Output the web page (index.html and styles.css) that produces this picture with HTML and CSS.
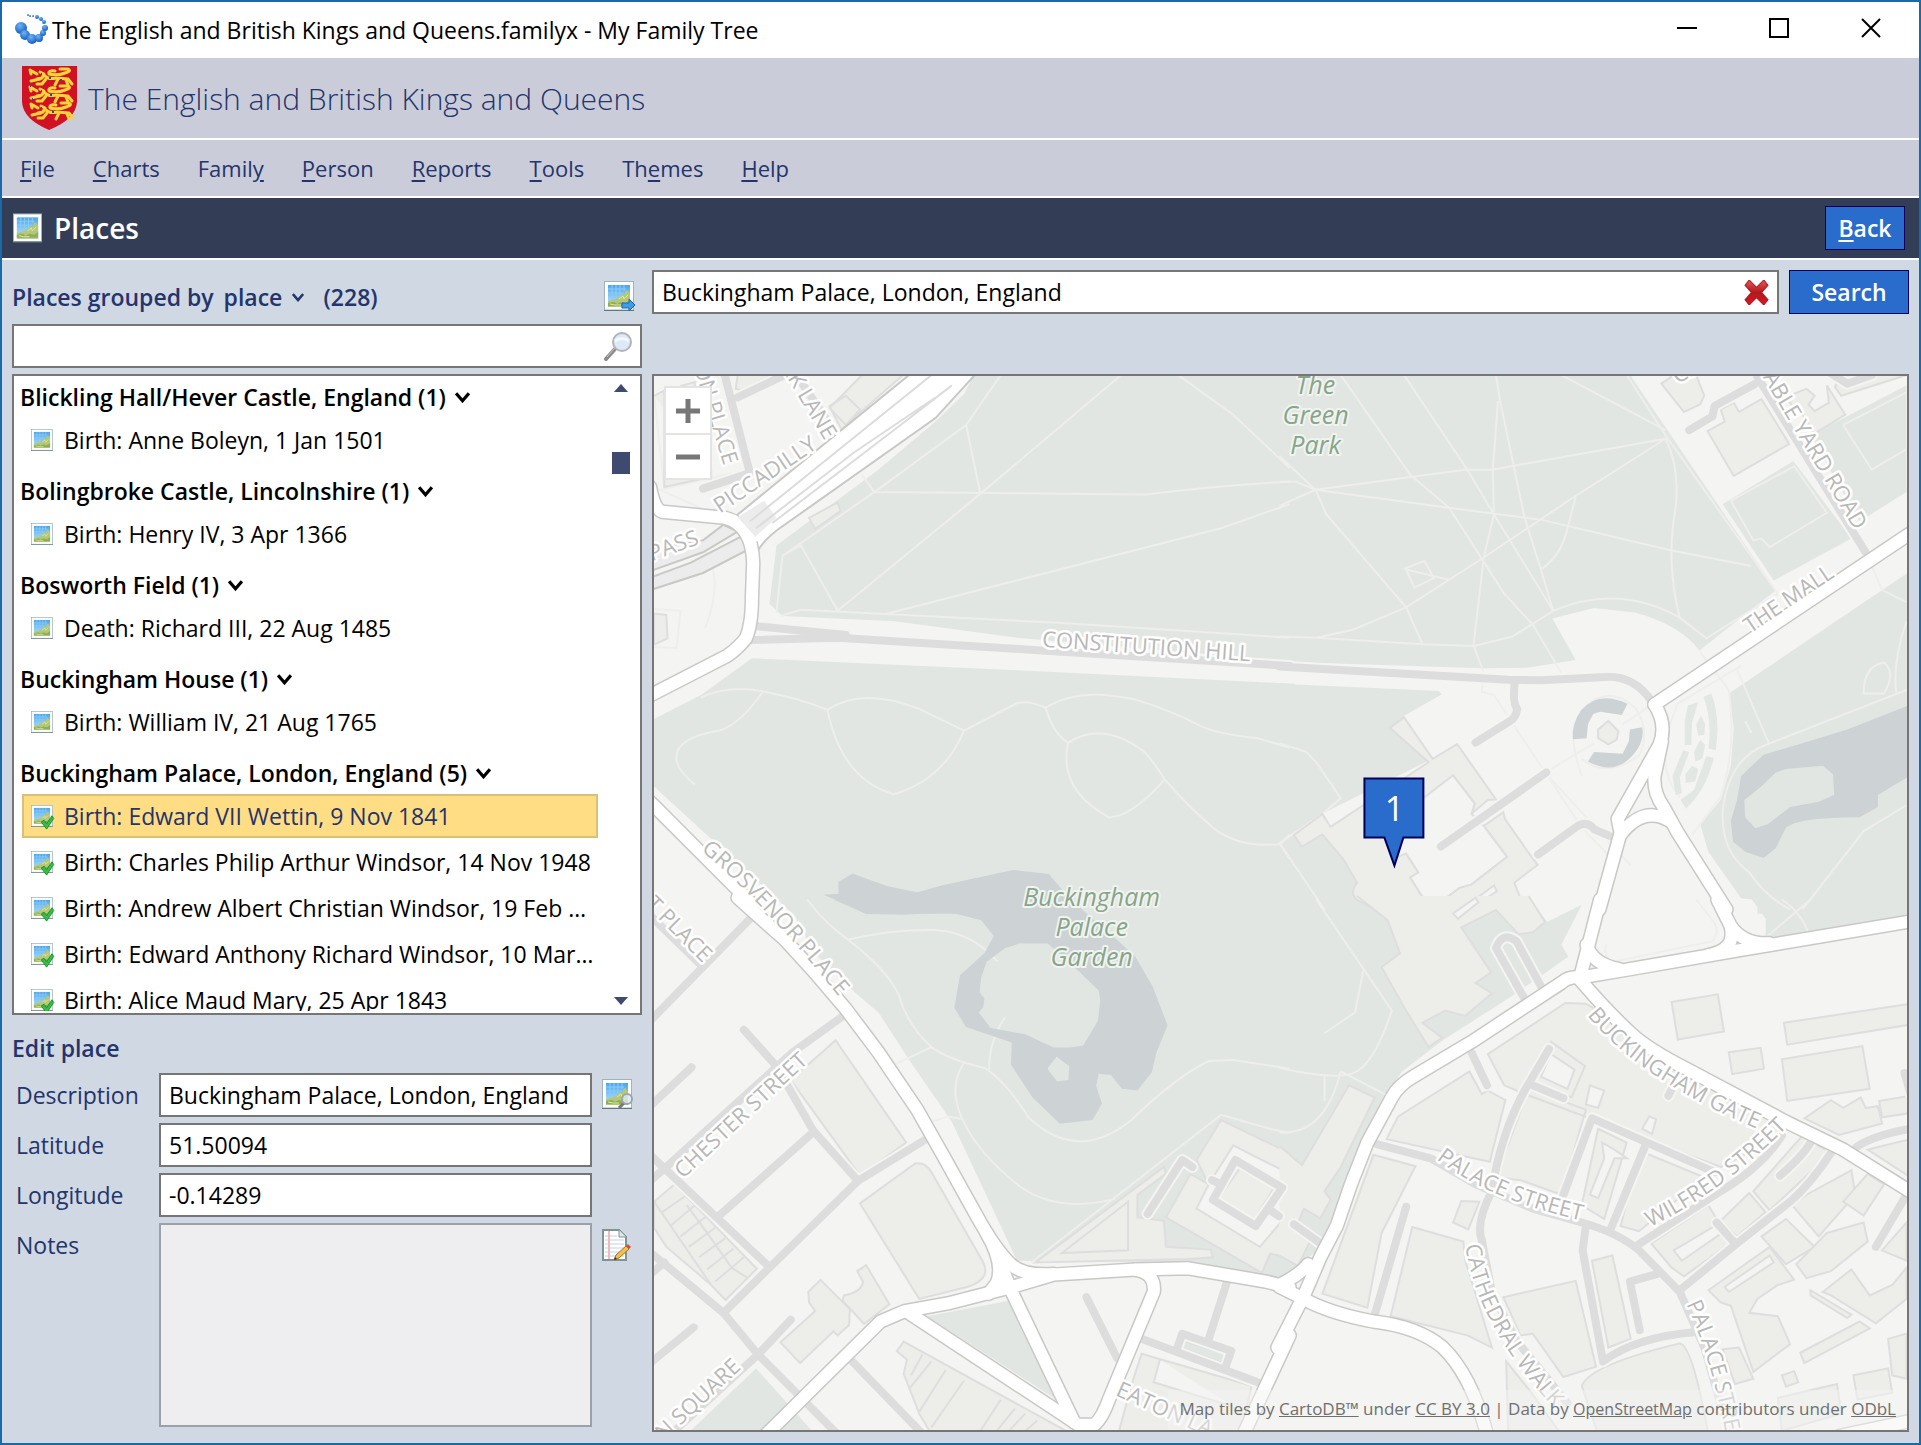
FILE: index.html
```html
<!DOCTYPE html>
<html lang="en">
<head>
  <meta charset="utf-8">
  <title>The English and British Kings and Queens.familyx - My Family Tree</title>
  <link rel="stylesheet" href="styles.css">
</head>
<body>
  <!-- Shared icons -->
  <svg class="sprite" aria-hidden="true">
    <defs>
      <linearGradient id="sky" x1="0" y1="0" x2="0" y2="1">
        <stop offset="0" stop-color="#4ba6ee"/>
        <stop offset="1" stop-color="#bfe6fb"/>
      </linearGradient>
      <radialGradient id="bead" cx="0.4" cy="0.3" r="0.8">
        <stop offset="0" stop-color="#6cb6f5"/>
        <stop offset="1" stop-color="#0b4fb8"/>
      </radialGradient>
      <linearGradient id="red" x1="0" y1="0" x2="0" y2="1">
        <stop offset="0" stop-color="#e8565a"/>
        <stop offset="0.5" stop-color="#b01a1a"/>
        <stop offset="1" stop-color="#dc1428"/>
      </linearGradient>
      <symbol id="icon-map" viewBox="0 0 30 30">
        <rect x="0.5" y="0.5" width="29" height="28.5" fill="#fff" stroke="#9fb3b8"/>
        <path d="M0 29.5H30" stroke="#5d7c80"/>
        <rect x="4" y="4" width="22" height="22" fill="url(#sky)"/>
        <path d="M8 4V20M12 4V18M16 4V16M20 4V10M4 8H22M4 12H20M4 16H16" stroke="#8ccbf7" stroke-width="1"/>
        <path d="M4 26V20L9 19L14 17L18 13L20 14L22 9L24 10L26 13V26Z" fill="#b4c878"/>
        <path d="M4 25V22L10 21L13 23L17 21L22 22L26 19V25Z" fill="#8fae5a"/>
        <path d="M15 18L19 15L20 18L24 14M6 23L11 24L17 24" stroke="#e0e6a8" fill="none"/>
      </symbol>
      <symbol id="icon-tick" viewBox="0 0 16 18">
        <path d="M1 9L4 7L7 11L13 2L15 5L7 17Z" fill="#35c045" stroke="#128a26"/>
      </symbol>
      <symbol id="icon-chevron" viewBox="0 0 14 10">
        <path d="M1 1L7 8L13 1" fill="none" stroke="currentColor" stroke-width="3"/>
      </symbol>
    </defs>
  </svg>

  <div class="window">
    <header class="titlebar">
      <svg class="app-icon" viewBox="0 0 34 32" aria-hidden="true">
        <g fill="url(#bead)">
          <circle cx="7" cy="14" r="6"/><circle cx="11" cy="21" r="5"/><circle cx="18" cy="25" r="5"/>
          <circle cx="25" cy="24" r="4"/><circle cx="29" cy="19" r="3"/><circle cx="31" cy="14" r="3"/>
          <circle cx="30" cy="8" r="2"/><circle cx="27" cy="5" r="2"/><circle cx="23" cy="3" r="2"/>
          <circle cx="19" cy="2" r="1"/><circle cx="16" cy="2" r="1"/><circle cx="14" cy="1" r="1"/>
        </g>
      </svg>
      <span class="titlebar-text">The English and British Kings and Queens.familyx - My Family Tree</span>
      <div class="window-buttons">
        <button type="button" aria-label="Minimise"><svg viewBox="0 0 22 22"><path d="M1 11H21"/></svg></button>
        <button type="button" aria-label="Maximise"><svg viewBox="0 0 22 22"><path d="M2 2H20V20H2Z"/></svg></button>
        <button type="button" aria-label="Close"><svg viewBox="0 0 22 22"><path d="M2 2L20 20M20 2L2 20"/></svg></button>
      </div>
    </header>

    <div class="banner">
      <svg class="crest" viewBox="0 0 55 64" aria-hidden="true">
        <path d="M0 0H55V36Q54 53 27 64Q1 53 0 36Z" fill="#d01224"/>
        <g id="lion" fill="none" stroke="#f6d33c" stroke-width="3" stroke-linecap="round" stroke-linejoin="round">
          <path d="M18 6L22 8L20 12L15 13M22 9Q26 14 34 12L46 13L50 18"/>
          <path d="M18 13L9 15M15 8L8 4L9 8M24 13L20 18H15M36 13L33 19M44 14L46 19M33 5Q26 4 27 8Q36 10 43 7Q50 5 46 3H38"/>
        </g>
        <path d="M19 8h1M27 12h2M38 14h2" stroke="#2450a0" stroke-width="2"/>
        <use href="#lion" y="17"/>
        <use href="#lion" x="1" y="34"/>
        <path d="M19 25h1M28 29h2M19 42h1M30 46h2M10 33h1M8 20h1" stroke="#2450a0" stroke-width="2"/>
      </svg>
      <h1>The English and British Kings and Queens</h1>
    </div>

    <nav class="menu">
      <a href="#"><u>F</u>ile</a>
      <a href="#"><u>C</u>harts</a>
      <a href="#">Famil<u>y</u></a>
      <a href="#"><u>P</u>erson</a>
      <a href="#"><u>R</u>eports</a>
      <a href="#"><u>T</u>ools</a>
      <a href="#">Th<u>e</u>mes</a>
      <a href="#"><u>H</u>elp</a>
    </nav>

    <div class="page-bar">
      <svg class="icon" aria-hidden="true"><use href="#icon-map"/></svg>
      <h2>Places</h2>
      <button type="button" class="btn btn-back"><u>B</u>ack</button>
    </div>

    <main class="content">
      <section class="sidebar">
        <div class="group-bar">
          <label for="groupBy">Places grouped by</label>
          <span class="select-wrap">
            <select id="groupBy">
              <option>place</option>
              <option>date</option>
            </select>
            <svg aria-hidden="true"><use href="#icon-chevron"/></svg>
          </span>
          <span class="count">(228)</span>
          <button type="button" class="icon-btn" aria-label="Export map">
            <svg viewBox="0 0 32 32">
              <use href="#icon-map" width="30" height="30"/>
              <path d="M18 22H25V18L31 24L25 30V27H18Z" fill="#3f9be8" stroke="#1b66b4"/>
            </svg>
          </button>
        </div>

        <div class="field-box filter">
          <input type="text" id="filter" aria-label="Filter places">
          <svg viewBox="0 0 30 30" aria-hidden="true">
            <path d="M2 28L11 18" stroke="#8a8a8a" stroke-width="4" stroke-linecap="round"/>
            <path d="M3 26L11 17" stroke="#c4c4c4" stroke-width="1"/>
            <circle cx="18" cy="11" r="9" fill="#dbe9f8" stroke="#b4b4b8" stroke-width="2"/>
            <path d="M11 10Q18 5 25 10" stroke="#f4f9ff" stroke-width="3" fill="none"/>
          </svg>
        </div>

        <div class="list-box">
          <div class="list">
            <div class="group">
              <button type="button" class="group-title">Blickling Hall/Hever Castle, England (1) <svg aria-hidden="true"><use href="#icon-chevron"/></svg></button>
              <button type="button" class="event"><span class="event-icon"><svg><use href="#icon-map"/></svg></span><span class="event-text">Birth: Anne Boleyn, 1 Jan 1501</span></button>
            </div>
            <div class="group">
              <button type="button" class="group-title">Bolingbroke Castle, Lincolnshire (1) <svg aria-hidden="true"><use href="#icon-chevron"/></svg></button>
              <button type="button" class="event"><span class="event-icon"><svg><use href="#icon-map"/></svg></span><span class="event-text">Birth: Henry IV, 3 Apr 1366</span></button>
            </div>
            <div class="group">
              <button type="button" class="group-title">Bosworth Field (1) <svg aria-hidden="true"><use href="#icon-chevron"/></svg></button>
              <button type="button" class="event"><span class="event-icon"><svg><use href="#icon-map"/></svg></span><span class="event-text">Death: Richard III, 22 Aug 1485</span></button>
            </div>
            <div class="group">
              <button type="button" class="group-title">Buckingham House (1) <svg aria-hidden="true"><use href="#icon-chevron"/></svg></button>
              <button type="button" class="event"><span class="event-icon"><svg><use href="#icon-map"/></svg></span><span class="event-text">Birth: William IV, 21 Aug 1765</span></button>
            </div>
            <div class="group">
              <button type="button" class="group-title">Buckingham Palace, London, England (5) <svg aria-hidden="true"><use href="#icon-chevron"/></svg></button>
              <button type="button" class="event selected"><span class="event-icon"><svg><use href="#icon-map"/></svg><svg class="tick"><use href="#icon-tick"/></svg></span><span class="event-text">Birth: Edward VII Wettin, 9 Nov 1841</span></button>
              <button type="button" class="event"><span class="event-icon"><svg><use href="#icon-map"/></svg><svg class="tick"><use href="#icon-tick"/></svg></span><span class="event-text">Birth: Charles Philip Arthur Windsor, 14 Nov 1948</span></button>
              <button type="button" class="event"><span class="event-icon"><svg><use href="#icon-map"/></svg><svg class="tick"><use href="#icon-tick"/></svg></span><span class="event-text">Birth: Andrew Albert Christian Windsor, 19 Feb 1960</span></button>
              <button type="button" class="event"><span class="event-icon"><svg><use href="#icon-map"/></svg><svg class="tick"><use href="#icon-tick"/></svg></span><span class="event-text">Birth: Edward Anthony Richard Windsor, 10 Mar 1964</span></button>
              <button type="button" class="event"><span class="event-icon"><svg><use href="#icon-map"/></svg><svg class="tick"><use href="#icon-tick"/></svg></span><span class="event-text">Birth: Alice Maud Mary, 25 Apr 1843</span></button>
            </div>
          </div>
          <div class="scrollbar">
            <svg viewBox="0 0 14 8"><path d="M0 8L7 0L14 8Z"/></svg>
            <span class="thumb"></span>
            <svg viewBox="0 0 14 8"><path d="M0 0L7 8L14 0Z"/></svg>
          </div>
        </div>

        <form class="edit-form">
          <h3>Edit place</h3>
          <label for="description">Description</label>
          <input type="text" id="description" value="Buckingham Palace, London, England">
          <button type="button" class="icon-btn" aria-label="Find on map">
            <svg viewBox="0 0 32 32">
              <use href="#icon-map" width="30" height="30"/>
              <path d="M17 29L22 24" stroke="#777" stroke-width="3"/>
              <circle cx="25" cy="20" r="5" fill="#dcebf5" fill-opacity="0.8" stroke="#9aa5aa" stroke-width="2"/>
            </svg>
          </button>
          <label for="latitude">Latitude</label>
          <input type="text" id="latitude" value="51.50094">
          <label for="longitude">Longitude</label>
          <input type="text" id="longitude" value="-0.14289">
          <label for="notes">Notes</label>
          <textarea id="notes" readonly></textarea>
          <button type="button" class="icon-btn" aria-label="Edit notes">
            <svg viewBox="0 0 32 32">
              <path d="M1 1H17L24 8V31H1Z" fill="#fff" stroke="#7f9496" stroke-width="2"/>
              <path d="M17 1V8H24" fill="#dfe8e8" stroke="#7f9496"/>
              <path d="M3 7H15M3 11H22M3 15H22M3 19H22M3 23H22M3 27H22" stroke="#c3cdf2"/>
              <path d="M7 2V30" stroke="#f4b8b8" stroke-width="2"/>
              <path d="M12 31L14 26L24 17L27 20L17 29Z" fill="#f2c14a" stroke="#a07420"/>
              <path d="M24 17L26 15L29 18L27 20Z" fill="#e04848"/>
              <path d="M12 31L13 28L15 30Z" fill="#333"/>
            </svg>
          </button>
        </form>
      </section>

      <section class="map-panel">
        <form class="search-row">
          <div class="field-box search-box">
            <input type="text" id="search" aria-label="Search for a place" value="Buckingham Palace, London, England">
            <button type="button" class="clear" aria-label="Clear">
              <svg viewBox="0 0 24 24"><path d="M1 5L5 0L12 7L19 0L23 5L17 12L23 19L19 24L12 17L5 24L1 19L7 12Z" fill="url(#red)" stroke="#a81a1e"/></svg>
            </button>
          </div>
          <button type="button" class="btn btn-search">Search</button>
        </form>

        <div class="map">
          <svg class="map-tiles" viewBox="0 0 1254 1055" preserveAspectRatio="xMidYMid slice">
            <defs>
              <!-- Street centre lines, one group per tile. Drawn twice: casing, then fill -->
              <g id="streets">
                <g class="nw">
                  <path d="M0 340Q10 405 30 412L100 420L185 430Q250 450 253 560L250 660Q250 740 235 780Q215 810 190 830L0 946"/>
                  <path d="M0 1255L250 1552"/>
                </g>
                <g class="ne">
                  <path d="M918 972L1550 470"/>
                  <path d="M918 972Q950 1030 930 1090L828 1305L835 1345L783 1568"/>
                  <path d="M936 1080L918 1180Q915 1230 940 1270L975 1345L1094 1568"/>
                  <path d="M835 1350Q890 1265 955 1310"/>
                </g>
                <g class="sw">
                  <path d="M215 -5L330 115L400 205L480 315L560 440L655 605L720 740L810 930Q850 1010 880 1045Q910 1085 990 1078"/>
                  <path d="M825 960Q870 1050 850 1105L830 1135"/>
                  <path d="M285 1540L565 1215L625 1185L730 1163L880 1118L990 1080L1190 1065L1320 1062L1510 1100L1568 1117"/>
                  <path d="M855 1035L885 1125L1040 1505"/>
                  <path d="M630 1187L1050 1512L1090 1512Q1110 1490 1125 1440L1235 1130Q1240 1075 1190 1066"/>
                  <path d="M1455 1540L1568 1255"/>
                </g>
                <g class="se">
                  <path d="M0 1115L60 1150Q120 1190 230 1215Q340 1230 400 1290Q470 1370 508 1540"/>
                  <path d="M-5 1290L60 1140L100 1030L140 940L175 820L215 700L275 570Q290 535 330 508L470 410L690 240Q710 220 735 225L860 200L1130 145L1550 62"/>
                  <path d="M0 1110Q50 1080 70 1050"/>
                  <path d="M735 228L785 0"/>
                  <path d="M1072 0L1104 75Q1120 145 1050 160M1104 75Q1135 130 1200 126"/>
                  <path d="M752 130Q765 185 830 200"/>
                  <path d="M735 230Q800 320 860 385Q900 430 1000 490L1240 640L1380 720L1550 845"/>
                  <path d="M1370 1545L1550 1500"/>
                </g>
              </g>
              <g id="lanes">
                <g class="nw">
                  <path d="M262 745L480 770M248 785L460 778L960 815L1568 860"/>
                  <path d="M180 0L245 300L130 345"/>
                  <path d="M350 0L460 190"/>
                  <path d="M215 80L330 15"/>
                </g>
                <g class="ne">
                  <path d="M0 862L560 900L640 902L800 892Q870 890 910 962"/>
                  <path d="M576 905Q570 970 582 985Q578 1010 565 1020L480 1083M653 1170L395 1385M633 1408L730 1325Q755 1310 770 1335L820 1360"/>
                  <path d="M1003 175L1060 135L1065 105L1165 40M1170 20L1435 530M1350 10L1390 40L1450 15"/>
                </g>
                <g class="sw">
                  <path d="M250 50L0 350M0 45L130 195M480 330L350 440L40 770L0 810M230 375L310 480L400 665L510 810M0 595L102 483M680 688L510 810L180 1190M400 670L170 910M0 735L290 1055M0 1015L180 1190L265 1310L460 1540M0 1335L107 1232M345 1210L265 1310L60 1530M492 1325L665 1535M1070 1145L1145 1320M1415 1100L1370 1265M1205 1265L1490 1390M0 1080L35 1045"/>
                  <path d="M1290 1300L1305 1250L1425 1300L1410 1350"/>
                  <path d="M1220 905L1305 750L1330 770M1435 750L1550 830L1485 940L1380 865ZM1378 808L1400 820M1515 890L1542 912"/>
                </g>
                <g class="se">
                  <path d="M602 290L530 140Q545 90 580 120L645 260M470 440L508 535M660 430L600 550Q540 680 520 840Q480 930 495 980L520 1130L580 1270L705 1450M620 535L695 572M240 705L370 745L480 820L620 890L740 930Q830 960 880 1010L980 1130L1040 1290L1100 1535M695 850L765 630L1065 785M895 710L812 945M880 992L1080 840Q1180 770 1230 680M985 1120L1120 990L1250 870Q1300 820 1350 730M1070 930L1115 990M1225 795Q1280 740 1300 700M1410 715Q1450 680 1545 660M1530 860L1460 1000M310 885L232 1200M750 940L742 1010L792 1330Q870 1260 1020 1245M925 1078L858 1100L882 1240M952 565L965 535M35 935L100 990M1530 500L1545 560"/>
                </g>
              </g>
            </defs>

            <!-- Parks -->
            <g class="park">
              <g class="nw">
                <path d="M800 0L770 70L700 150L560 290L310 510L293 680L325 715L600 730L900 778L1580 848V0Z"/>
                <path d="M250 838L900 873L1580 912V1580H350L0 1200V1020L125 945Z"/>
              </g>
              <g class="ne">
                <path d="M0 0H850L1215 640L1028 815Q980 740 870 705L770 692L668 722L725 843L610 865L500 867L0 848Z"/>
                <path d="M1085 390L1258 265L1400 490L1210 612Z"/>
                <path d="M1300 190L1535 45V355L1420 440Z"/>
                <path d="M0 912L390 933L397 943L305 1005L365 1135L105 1290L160 1430L235 1580H0Z"/>
                <path d="M1550 580L1475 640L1100 940L1112 1040L1105 1150L1080 1250L1030 1320L1050 1400L1130 1535L1170 1540V1580H1550Z"/>
                <path d="M520 1540L560 1500L600 1580H500Z"/>
              </g>
              <g class="sw">
                <path d="M330 -10L400 150L470 235L560 325L640 470L740 640L900 1040L1320 1045L1580 1095V-10Z"/>
                <path d="M680 1200L880 1155L1010 1450Z"/>
                <path d="M90 1540L260 1350L405 1540Z"/>
              </g>
              <g class="se">
                <path d="M0 -10H610L655 65L740 15L690 130L707 165L560 285L400 405L300 495L262 560L215 690L150 850L100 1000L60 1045L0 1092Z"/>
                <path d="M1150 -10L1190 55L1190 110H1220L1550 45V-10Z"/>
              </g>
            </g>

            <!-- Footpaths -->
            <g class="path">
              <g class="nw">
                <path d="M310 705L325 540L550 355L775 160L860 15M775 160L810 360L1155 15M550 355L1215 362Q1400 335 1568 325M520 305L550 355M810 360L460 700L370 510L325 540M575 710L1400 460L1568 390M1295 15L1430 130L1568 285M320 715L370 697L1000 735L1568 778"/>
                <path d="M125 952Q200 910 300 940Q370 955 435 988Q520 920 660 985L770 1048L900 968Q930 960 970 982Q1050 920 1190 958Q1280 990 1350 1035Q1400 1060 1490 1070L1568 1098M435 988Q470 1190 598 1233Q720 1190 770 1048M970 982Q990 1060 1025 1083Q1110 1020 1210 1108Q1230 1130 1262 1190Q1180 1300 1125 1300Q1000 1220 1025 1083M1262 1190Q1320 1270 1385 1335Q1450 1390 1545 1378L1568 1350M1545 1378L1568 1420"/>
                <path d="M275 938Q220 1030 170 1048Q60 1070 65 1130Q65 1160 110 1205M130 520Q185 600 135 750M10 695L75 700L65 808L10 805"/>
                <path d="M10 70L35 345L200 300M0 335L140 410"/>
              </g>
              <g class="ne">
                <path d="M150 15L320 305L415 400L550 650L620 740L690 880M305 15L460 290L525 420L670 700M530 15L540 90L600 430L640 580L670 700M535 90L522 290L525 420L500 545L475 800L500 880L495 935L525 945L740 1330L830 1440M690 15L945 175M850 15L945 190L1220 650M945 200L520 290L455 290L88 348L0 250M88 348L410 400L640 435L960 525L1155 570M88 348L115 420L310 690L350 797M945 200L720 370L500 545L310 690L180 755L90 778L0 775M725 370L705 460Q690 540 640 580M945 200Q980 280 970 400Q945 560 980 720M90 778L350 797L475 802L570 775L670 700Q830 620 980 720L1045 780L1220 650M0 325L40 325L88 348L0 395M305 578L355 555L378 605L330 633L310 580L415 610"/>
                <path d="M1190 1090Q1100 1130 1085 1280Q1080 1400 1150 1460Q1190 1530 1250 1568M1190 1090L1535 930M1200 1090L1120 870M1535 730Q1500 850 1510 940M1280 1568L1430 1340L1535 1265M1475 640L1535 675M1440 540L1475 640M1430 940Q1430 860 1480 850Q1510 880 1480 940ZM1140 1020L1155 1055"/>
                <path d="M1030 820L1100 930Q1120 1100 1080 1240Q1030 1320 1010 1350M980 1240Q910 1150 975 970L1130 860M740 1180Q700 1050 740 990Q800 910 870 980Q910 1050 880 1120Q800 1190 740 1130M840 1030L1150 780M770 1085L650 1170L860 1440M0 1085L65 1110L90 1140L150 1245L105 1290L0 1375L110 1568M1105 380L1260 280L1340 415L1200 515L1180 490L1160 495ZM1380 160L1535 65M1380 160L1450 290L1535 230"/>
              </g>
              <g class="sw">
                <path d="M385 0Q430 70 485 115Q580 200 610 275Q630 360 690 425Q730 460 820 485Q870 520 930 630Q1050 760 1180 635Q1290 510 1370 465L1430 462L1568 487M485 115Q600 85 700 88Q790 95 852 178M690 425L600 475M770 470Q730 540 765 630Q800 720 880 800Q980 910 1140 862M870 340Q830 410 832 490M690 640L730 625L765 632M935 1045L1400 620L1520 660L1568 672"/>
              </g>
              <g class="se">
                <path d="M90 0L275 320Q230 480 180 500Q140 520 0 485M205 205L185 325L110 385M150 495L265 565M150 495Q110 680 0 670M110 510L110 580M800 130Q790 160 815 180L1060 120Q1080 90 1060 60L1020 0M1190 110L1300 0M1230 0Q1280 40 1295 100"/>
              </g>
            </g>

            <!-- Lakes -->
            <g class="water">
              <g class="nw"><path d="M425 1525L462 1522V1488L497 1463L580 1500L655 1518L720 1497L890 1453L978 1465L1010 1510L1070 1580H540Z"/></g>
              <g class="sw">
                <path fill-rule="evenodd" d="M450 0L530 42L620 44L735 37L812 60L843 105L820 155L760 218L746 312L775 367L887 412L885 475L938 570L1005 646L1085 635L1108 587L1094 537L1100 502L1130 505L1157 545L1195 550L1230 498L1242 440L1269 362L1232 250L1190 165L1130 100L1060 30L1040 0ZM905 127H975L1050 205L1100 262L1104 290L1098 350L1062 420L1030 426H990L920 388L835 370L806 325L817 310L820 285L808 267L812 225L825 180L870 140ZM997 453L1028 480L1026 520L998 523L978 493L975 485Z"/>
              </g>
              <g class="ne">
                <path fill-rule="evenodd" d="M1550 970L1390 1045L1280 1085L1185 1118L1130 1180L1120 1250L1105 1310L1110 1370L1140 1400L1185 1418L1215 1390L1240 1330Q1270 1300 1420 1300L1465 1270V1235L1550 1175ZM1240 1160L1330 1150L1355 1175L1358 1235L1320 1255L1250 1270L1195 1320L1165 1332L1140 1300L1138 1250L1180 1210L1215 1170Z"/>
                <path d="M852 970Q780 930 738 990Q715 1030 718 1073L752 1070L755 1030L768 1000L785 993L838 1003Z"/>
                <path d="M755 1138Q820 1180 865 1120Q895 1080 888 1038L858 1045L855 1080L840 1115L770 1110Z"/>
              </g>
            </g>
            <g class="bed">
              <g class="ne">
                <path d="M1038 950L1057 940Q1080 1010 1068 1105L1050 1100Q1060 1020 1038 950M1000 975L1025 965L1010 1025L1008 1090H992V1020ZM1032 1005L1042 1030L1040 1060L1025 1062L1020 1030ZM1030 1075L1042 1090L1035 1130L1018 1138L1015 1110ZM988 1105L1003 1110L980 1185L985 1230L970 1235L962 1180ZM1010 1150L1025 1160L1018 1195L995 1200L993 1175ZM1045 1122L1063 1128Q1045 1220 995 1275L982 1250L1015 1220Z"/>
              </g>
            </g>

            <!-- Buildings -->
            <g class="building">
              <g class="nw">
                <path d="M470 75L520 15H620L480 160L440 110ZM440 105L480 75L515 115L470 175Z"/>
                <path d="M210 55L215 15H300L225 60ZM10 75L35 60V340L150 310V290M80 45L110 35V60Z"/>
                <path d="M390 430L460 385L467 410L405 462ZM10 708L40 712L43 780L10 798Z"/>
              </g>
              <g class="ne">
                <path d="M1048 178L1090 150L1080 115L1112 95L1125 122L1180 85L1248 215L1112 308ZM935 40L965 15H1020L1040 75L1030 100L990 122ZM1235 80L1290 55L1310 75L1295 100L1310 120L1345 95L1340 45L1385 130L1310 185L1280 130ZM1360 50L1375 75L1535 15V0H1380Z"/>
                <path d="M235 1568L190 1540Q170 1520 190 1490L155 1420L105 1350L55 1385L35 1352L105 1290L125 1328L365 1140L270 1040L305 1010L375 1130L435 1087L460 1130L530 1248L510 1250L470 1290L478 1260L425 1178L330 1265L420 1400L310 1405L340 1460L320 1475L370 1568"/>
                <path d="M600 1568L575 1490L632 1438L605 1395L552 1305L548 1285L500 1325L557 1415L470 1495L440 1505L370 1568"/>
                <path class="hole" d="M330 1265L425 1178L478 1260L470 1290L500 1325L557 1415L470 1495L440 1505L370 1568L320 1475L340 1460L310 1405L290 1415L275 1370Z"/>
                <path class="hole" d="M483 1535L525 1498L532 1515L490 1548Z"/>
                <path d="M780 1045L805 1020L830 1050L825 1075L805 1088L780 1070Z"/>
              </g>
              <g class="sw">
                <path d="M345 520L455 405L628 700L515 795ZM515 875L650 760Q675 755 690 785L815 1040Q840 1090 780 1115L660 1150Z"/>
                <path d="M320 1275L405 1185L390 1160L388 1130L418 1095L490 1180L488 1225L460 1255L450 1243L368 1335ZM475 1140Q520 1130 522 1100L508 1070L530 1053L587 1165L525 1222L472 1155Z"/>
                <path d="M10 870L60 820L262 1063L185 1153L150 1110L40 1000L10 945Z"/>
                <path d="M10 870L150 1110M30 900L85 855M50 940L110 880M75 970L135 915M95 1000L160 945M120 1030L185 975M140 1065L205 1005M160 1100L230 1030M90 880L140 960L200 1060L240 1090"/>
                <path d="M605 1300L622 1273L1020 1530H685L660 1480L622 1365L630 1325ZM668 1310L640 1370M690 1330L635 1410M725 1355L660 1475M770 1385L690 1520M860 1440L810 1530M895 1465L850 1530M920 1480L880 1530M950 1500L920 1530"/>
                <path d="M945 1045L1260 770L1265 790L1195 850V915L1260 925L1265 1000L1375 1008L1380 1030L1320 1035ZM1010 1018L1172 870V1010Z"/>
                <path d="M1568 730L1400 635L1340 750L1370 820L1325 790L1265 915L1500 1075L1520 1020L1568 1030"/>
                <path class="hole" d="M1568 790L1430 708L1370 820L1340 890L1495 1000L1568 900"/>
                <path d="M1445 775L1530 830L1480 925L1395 860Z"/>
                <path class="park-yard" d="M1305 1270L1415 1310L1408 1335L1295 1290Z"/>
                <path d="M1180 1400L1205 1308L1475 1400L1450 1530H1150ZM1250 1325L1235 1390L1430 1460M1130 1470L1100 1530"/>
              </g>
              <g class="se">
                <path d="M190 -10L265 60L295 155L250 195L310 320L365 425L398 398L350 355L405 320L455 335L520 270L480 240L518 210L445 80L530 30L585 100L620 95L650 65L610 -10"/>
                <path class="hole" d="M425 40L480 -5L487 8L437 55Z"/>
                <path d="M960 295L1073 273L1088 380L975 403ZM1235 355L1545 300V360L1243 418ZM1100 440L1178 427L1186 487L1108 503ZM1230 460L1427 422L1445 545L1243 580ZM1285 630L1350 578L1380 600L1423 570L1435 600L1465 595L1475 645L1370 678ZM1468 580L1545 565V615L1475 627Z"/>
                <path d="M510 445L700 298L750 300L1240 640L1215 690L1080 770L600 560L550 535ZM262 690L290 625L465 495L495 560L510 550L553 577L515 755ZM610 545L750 605L690 850L590 808L530 800ZM665 410L748 480L715 570L620 530Z"/>
                <path class="hole" d="M665 445L722 490L705 545L640 510ZM760 535L795 550L780 600L750 590ZM905 625L922 632L912 675L888 660Z"/>
                <path d="M740 880L780 660L850 700L795 920ZM895 730L1040 800L880 955L835 940L855 850Z"/>
                <path class="hole" d="M790 700L820 720L850 745L820 745L780 860L760 850L795 745Z"/>
                <path d="M0 710L55 765L170 535L233 570L150 770L110 840L125 865L100 918L60 890L45 930L85 960L45 1055L0 1025M230 735L333 768L250 960L215 1175L105 1135ZM325 943L450 985L455 1040L520 1290L460 1255L272 1200ZM445 868L490 870L462 950L425 930Z"/>
                <path d="M548 1145L725 1098L775 1345L695 1375L620 1250L590 1255ZM765 1040L815 1025L860 1265L805 1290ZM555 1330L610 1410L690 1540H560ZM740 1400Q760 1340 980 1278Q1010 1280 1050 1540H780Z"/>
                <path d="M910 990L1050 880L1070 920L1115 980L990 1085L960 1060ZM1080 925L1150 845L1190 900L1120 970ZM1160 840L1280 680L1350 730L1200 895ZM1255 880L1290 850L1400 780L1410 850L1320 970ZM1180 970L1240 920L1310 1000L1240 1050ZM1050 1125L1200 1000L1260 1095L1220 1110L1170 1150L1150 1190L1220 1200L1250 1280L1160 1360L1105 1170L1080 1160Z"/>
                <path class="hole" d="M965 1010L1080 930L1095 950L985 1040ZM1090 1115L1200 1025L1210 1045L1100 1130Z"/>
                <path d="M1265 1050L1340 960L1430 930L1440 985L1350 1070L1290 1090ZM1330 1130L1400 1065L1445 1140L1500 1110L1535 1060V1150L1460 1220L1350 1140ZM1275 1305L1420 1215L1445 1235L1285 1335ZM1380 870L1440 790L1480 820L1430 910ZM1475 1010L1535 930V1040ZM1490 1265L1535 1250V1380L1500 1370ZM1405 1370L1490 1350L1500 1420L1415 1440ZM1230 1370L1260 1358L1270 1390L1240 1403ZM1220 1435L1365 1395L1375 1480L1230 1530ZM1440 720L1545 690V800ZM1085 1295L1125 1290L1160 1380L1115 1395ZM1300 1125L1400 1195L1390 1205L1300 1140Z"/>
              </g>
            </g>

            <!-- Roads -->
            <use href="#lanes" class="lane-edge"/>
            <use href="#lanes" class="lane"/>
            <g class="underpass">
              <g class="nw"><path d="M0 585L130 530L215 470L180 450L130 495L0 520M0 604L100 560L230 480L260 510L130 590L0 640"/></g>
            </g>
            <g class="dual">
              <g class="nw"><path d="M205 430L640 10H800L700 140L330 450Q280 490 262 530L240 480Z"/></g>
            </g>
            <use href="#streets" class="street-edge"/>
            <use href="#streets" class="street"/>
            <g class="dual-fill">
              <g class="nw"><path d="M230 425L655 10H790L690 140L330 440Q275 480 260 500Z"/></g>
            </g>
            <g class="underpass-end">
              <g class="nw"><path d="M215 428L280 380L310 430L258 485Z"/></g>
            </g>
            <g class="dual-lines">
              <g class="nw"><path d="M245 440L690 15M260 460L500 240L700 80M300 445L620 155L740 45"/></g>
            </g>

            <!-- Street names -->
            <defs>
              <path id="way-grosvenor" d="M47 475Q112 528 200 640"/>
              <path id="way-gate" d="M934 640Q990 710 1130 764"/>
              <path id="way-wilfred" d="M997 852Q1078 812 1145 740"/>
              <path id="way-palace" d="M783 784Q840 828 950 850"/>
              <path id="way-cathedral" d="M812 870Q824 956 915 1048"/>
              <path id="way-palace2" d="M1033 929Q1062 990 1078 1090"/>
            </defs>
            <g class="street-name">
              <text transform="translate(66 138) rotate(-34)">PICCADILLY</text>
              <text transform="translate(171 65) rotate(59)" text-anchor="end">RK LANE</text>
              <text transform="translate(70 90) rotate(73)" text-anchor="end">ON PLACE</text>
              <text transform="translate(46 168) rotate(-20)" text-anchor="end">PASS</text>
              <text transform="translate(388 271) rotate(4)">CONSTITUTION HILL</text>
              <text transform="translate(49 588) rotate(45)" text-anchor="end">T PLACE</text>
              <text transform="translate(29 804) rotate(-43)">CHESTER STREET</text>
              <text transform="translate(88 993) rotate(-43)" text-anchor="end">N SQUARE</text>
              <text transform="translate(461 1020) rotate(24)">EATON LA</text>
              <text transform="translate(1097 258) rotate(-34)">THE MALL</text>
              <text transform="translate(1202 155) rotate(59)" text-anchor="end">ABLE YARD ROAD</text>
              <text transform="translate(1024 8) rotate(-28)">CL</text>
              <text><textPath href="#way-grosvenor">GROSVENOR PLACE</textPath></text>
              <text><textPath href="#way-gate">BUCKINGHAM GATE</textPath></text>
              <text><textPath href="#way-wilfred">WILFRED STREET</textPath></text>
              <text><textPath href="#way-palace">PALACE STREET</textPath></text>
              <text><textPath href="#way-cathedral">CATHEDRAL WALK</textPath></text>
              <text><textPath href="#way-palace2">PALACE STRE</textPath></text>
            </g>
            <g class="park-name">
              <text x="662" y="18">The</text>
              <text x="662" y="48">Green</text>
              <text x="662" y="78">Park</text>
              <text x="438" y="531">Buckingham</text>
              <text x="438" y="561">Palace</text>
              <text x="438" y="591">Garden</text>
            </g>

            <g class="marker">
              <path d="M711 403H770V462H750L741 490L731 462H711Z"/>
              <text x="741" y="445">1</text>
            </g>
          </svg>

          <div class="zoom">
            <button type="button" aria-label="Zoom in"><svg viewBox="0 0 24 24"><path d="M0 12H24M12 0V24"/></svg></button>
            <button type="button" aria-label="Zoom out"><svg viewBox="0 0 24 24"><path d="M0 12H24"/></svg></button>
          </div>
          <p class="attribution">Map tiles by <a href="#">CartoDB™</a> under <a href="#">CC BY 3.0</a> | Data by <a href="#" class="osm">OpenStreetMap</a> contributors under <a href="#">ODbL</a></p>
        </div>
      </section>
    </main>
  </div>
</body>
</html>
```
FILE: styles.css
```css
* {
  box-sizing: border-box;
}

body {
  margin: 0;
  font-family: "Segoe UI", "Open Sans", sans-serif;
  font-size: 23px;
  color: #000;
}

button,
input,
select,
textarea {
  font: inherit;
  color: inherit;
  margin: 0;
  border-radius: 0;
}

button {
  background: none;
  border: none;
  padding: 0;
}

h1,
h2,
h3,
p {
  margin: 0;
}

.sprite {
  position: absolute;
  width: 0;
  height: 0;
}

.window {
  display: flex;
  flex-direction: column;
  height: 100vh;
  border: 2px solid #1a69a8;
  background-color: #d0d8e3;
}

/* Title bar */
.titlebar {
  display: flex;
  align-items: center;
  height: 56px;
  padding: 0 2px 0 12px;
  background-color: #fff;
}

.app-icon {
  width: 34px;
  height: 32px;
  margin-right: 4px;
}

.titlebar-text {
  flex: 1;
}

.window-buttons {
  display: flex;
}

.window-buttons button {
  width: 92px;
  height: 56px;
}

.window-buttons svg {
  width: 22px;
  height: 22px;
  fill: none;
  stroke: #000;
  stroke-width: 2;
}

/* Banner and menu */
.banner {
  display: flex;
  align-items: center;
  height: 82px;
  padding-left: 20px;
  background-color: #cacdd9;
  border-bottom: 2px solid #fff;
  color: #24346c;
}

.crest {
  width: 55px;
  height: 64px;
  margin-right: 11px;
}

.banner h1 {
  font-size: 30px;
  font-weight: 300;
}

.menu {
  display: flex;
  align-items: center;
  gap: 38px;
  height: 58px;
  padding-left: 18px;
  background-color: #cacdd9;
  border-bottom: 2px solid #fff;
  font-size: 22px;
}

.menu a {
  color: #24346c;
  text-decoration: none;
}

u {
  text-underline-offset: 3px;
}

.page-bar {
  display: flex;
  align-items: center;
  height: 62px;
  padding: 0 14px 0 11px;
  background-color: #333e56;
  border-bottom: 2px solid #fff;
  color: #fff;
}

.page-bar .icon {
  width: 29px;
  height: 30px;
  margin-right: 12px;
}

.page-bar h2 {
  flex: 1;
  font-size: 28px;
  font-weight: 600;
}

.btn {
  height: 44px;
  background-color: #2a6ccb;
  border: 1px solid #00005a;
  color: #fff;
  font-weight: 600;
}

.btn-back {
  width: 80px;
}

.btn-search {
  width: 120px;
}

/* Content */
.content {
  display: grid;
  grid-template-columns: 630px 1fr;
  gap: 10px;
  flex: 1;
  min-height: 0;
  padding: 0 10px;
}

.sidebar {
  display: flex;
  flex-direction: column;
  min-height: 0;
  padding-bottom: 16px;
}

.group-bar {
  display: flex;
  align-items: center;
  height: 64px;
  padding: 10px 6px 0 0;
  color: #24346c;
  font-weight: 600;
}

.select-wrap {
  display: flex;
  align-items: center;
  margin: 0 20px 0 10px;
}

.select-wrap select {
  appearance: none;
  background: none;
  border: none;
  padding: 0;
}

.select-wrap svg {
  width: 12px;
  height: 9px;
  margin-left: 9px;
}

.count {
  flex: 1;
}

.icon-btn svg {
  display: block;
  width: 32px;
  height: 32px;
}

.field-box {
  display: flex;
  align-items: center;
  height: 44px;
  padding: 0 6px 0 8px;
  background-color: #fff;
  border: 2px solid #767677;
}

.field-box input {
  flex: 1;
  min-width: 0;
  padding: 0;
  border: none;
  outline: none;
}

.filter svg {
  width: 30px;
  height: 30px;
}

.list-box {
  display: flex;
  flex: 1;
  min-height: 0;
  margin-top: 6px;
  background-color: #fff;
  border: 2px solid #767677;
}

.list {
  flex: 1;
  min-width: 0;
  margin-bottom: 2px;
  padding-left: 6px;
  overflow: hidden;
}

.group {
  margin-bottom: 8px;
}

.group-title {
  display: block;
  height: 42px;
  font-weight: 600;
}

.group-title svg {
  width: 15px;
  height: 11px;
  margin-left: 3px;
  vertical-align: 3px;
}

.event {
  display: flex;
  align-items: center;
  width: 576px;
  height: 44px;
  margin: 0 0 2px 2px;
  padding-left: 7px;
  border: 2px solid transparent;
  text-align: left;
}

.event.selected {
  background-color: #ffdd85;
  border-color: #d9bf77;
  color: #24346c;
}

.event-icon {
  position: relative;
  flex: none;
  width: 22px;
  height: 23px;
  margin-right: 11px;
}

.event-icon svg {
  display: block;
  width: 22px;
  height: 22px;
}

.event-icon .tick {
  position: absolute;
  right: -2px;
  bottom: -2px;
  width: 15px;
  height: 16px;
}

.event-text {
  overflow: hidden;
  text-overflow: ellipsis;
  white-space: nowrap;
}

.scrollbar {
  display: flex;
  flex-direction: column;
  align-items: center;
  width: 42px;
  padding: 8px 0 8px 4px;
  fill: #3f4a70;
}

.scrollbar svg {
  width: 14px;
  height: 8px;
}

.thumb {
  width: 18px;
  height: 22px;
  margin: 60px 0 auto;
  background-color: #3f4a70;
}

/* Edit form */
.edit-form {
  display: grid;
  grid-template-columns: 137px 433px 32px;
  grid-template-rows: 52px 44px 44px 44px 204px;
  gap: 6px 10px;
  align-items: center;
  color: #24346c;
}

.edit-form h3 {
  grid-column: 1 / -1;
  padding-top: 14px;
  font-size: 23px;
  font-weight: 600;
}

.edit-form label {
  grid-column: 1;
  padding-left: 4px;
}

.edit-form input,
.edit-form textarea {
  width: 100%;
  height: 100%;
  padding: 0 8px;
  background-color: #fff;
  border: 2px solid #767677;
  color: #000;
}

.edit-form textarea {
  background-color: #eeeef0;
  border-color: #9aa1a9;
  resize: none;
}

.edit-form label[for="notes"],
.edit-form textarea + .icon-btn {
  align-self: start;
  padding-top: 6px;
}

/* Map side */
.map-panel {
  display: flex;
  flex-direction: column;
  min-width: 0;
  min-height: 0;
  padding: 10px 0 11px;
}

.search-row {
  display: flex;
  gap: 10px;
  margin-bottom: 60px;
}

.search-box {
  flex: 1;
}

.clear svg {
  display: block;
  width: 25px;
  height: 25px;
  margin-right: 2px;
}

.map {
  position: relative;
  flex: 1;
  min-height: 0;
  background-color: #f4f4f2;
  border: 2px solid #767677;
}

.map-tiles {
  display: block;
  width: 100%;
  height: 100%;
}

.map-tiles path {
  vector-effect: non-scaling-stroke;
}

/* Tile placement inside the map */
.nw {
  transform: translate(-4px, -6px) scale(0.4082, 0.3444);
}

.ne {
  transform: translate(626px, -6px) scale(0.4088, 0.3444);
}

.sw {
  transform: translate(-4px, 524px) scale(0.4082, 0.3476);
}

.se {
  transform: translate(626px, 524px) scale(0.4088, 0.3476);
}

.park {
  fill: #e1e6e2;
}

.path {
  fill: none;
  stroke: #eeeeec;
  stroke-width: 2;
}

.water {
  fill: #cdd2d5;
}

.bed {
  fill: #e3e7e4;
}

.building {
  fill: #edeeea;
  stroke: #dedede;
  stroke-width: 2;
}

.building .hole {
  fill: #f4f4f2;
}

.building .park-yard {
  fill: #e1e6e2;
}

.lane-edge,
.lane,
.street-edge,
.street {
  fill: none;
  stroke-linecap: round;
  stroke-linejoin: round;
}

.lane-edge {
  stroke: #f4f4f2;
  stroke-width: 12px;
}

.lane {
  stroke: #dddddd;
  stroke-width: 8px;
}

.street-edge {
  stroke: #c8c8c6;
  stroke-width: 15px;
}

.street {
  stroke: #fff;
  stroke-width: 12px;
}

.underpass,
.underpass-end {
  fill: #ececec;
}

.underpass {
  stroke: #c8c8c6;
  stroke-width: 2;
}

.dual {
  fill: #fff;
  stroke: #c8c8c6;
  stroke-width: 2;
}

.dual-fill {
  fill: #fff;
}

.dual-lines {
  fill: none;
  stroke: #dcdcdc;
  stroke-width: 2;
}

.street-name {
  fill: #b8b8b8;
  stroke: #fff;
  stroke-width: 5;
  stroke-linejoin: round;
  paint-order: stroke;
  font-family: "Open Sans", sans-serif;
  font-size: 22px;
}

.park-name {
  fill: #86a58a;
  stroke: #f1f3f0;
  stroke-width: 4;
  stroke-linejoin: round;
  paint-order: stroke;
  font-family: "Open Sans", sans-serif;
  font-size: 25px;
  font-style: italic;
  font-weight: 500;
  text-anchor: middle;
}

.marker path {
  fill: #2a6ccb;
  stroke: #00005a;
  stroke-width: 2;
}

.marker text {
  fill: #fff;
  font-size: 34px;
  text-anchor: middle;
}

.zoom {
  position: absolute;
  top: 10px;
  left: 10px;
  width: 48px;
  border: 2px solid #e4e4e2;
  background-color: #fff;
}

.zoom button {
  display: flex;
  align-items: center;
  justify-content: center;
  width: 100%;
  height: 45px;
}

.zoom button + button {
  border-top: 2px solid #e4e4e2;
}

.zoom svg {
  width: 24px;
  height: 24px;
  stroke: #777;
  stroke-width: 5;
}

.attribution {
  position: absolute;
  right: 0;
  bottom: 0;
  padding: 6px 11px 8px;
  background-color: rgba(244, 244, 242, 0.5);
  color: #6f6f6f;
  font-size: 17px;
  line-height: 26px;
}

.attribution a {
  color: inherit;
}

.attribution .osm {
  font-size: 16px;
}
```
